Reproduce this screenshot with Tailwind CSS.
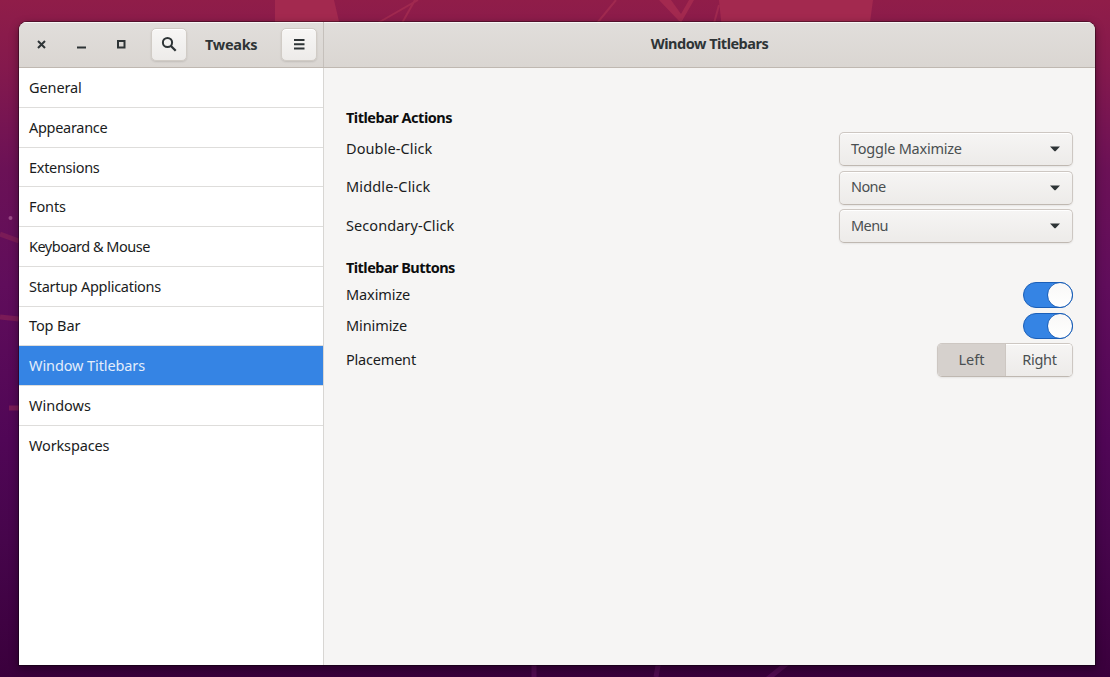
<!DOCTYPE html>
<html lang="en">
<head>
<meta charset="utf-8">
<title>Tweaks</title>
<script src="https://cdn.jsdelivr.net/npm/@tailwindcss/browser@4"></script>
</head>
<body class="relative h-[677px] w-[1110px] overflow-hidden bg-[#4d0752] font-['Noto_Sans','Open_Sans',sans-serif] text-[14.5px] leading-5 text-[#1a1c1d]">
<!-- Wallpaper -->
<svg class="absolute inset-0" width="1110" height="677" viewBox="0 0 1110 677">
  <defs>
    <linearGradient id="sky" x1="0" y1="0" x2="0" y2="1">
      <stop offset="0" stop-color="#901d49"/><stop offset=".1" stop-color="#84194d"/><stop offset=".25" stop-color="#6b1156"/><stop offset=".42" stop-color="#600d5b"/><stop offset=".65" stop-color="#500656"/><stop offset=".8" stop-color="#46054b"/><stop offset="1" stop-color="#3a003c"/>
    </linearGradient>
  </defs>
  <rect width="1110" height="677" fill="url(#sky)"/>
  <path d="M275 0h59l14 60h-73zM719 0h154l-8 60H725z" fill="#a3294f"/>
  <path d="M659 0h12l10 14 8-14h5l-12 21h-3z" fill="#a3294f"/>
  <g fill="none" stroke="#a0294f" stroke-width="2">
    <path d="M343 43L418 0M415 0L384 55M616 0L575 50M681 18v30M719 5L708 45"/>
  </g>
  <g fill="none" stroke="#7a1b57" stroke-width="5">
    <path d="M0 234L19 241M0 317L19 319M9 408h10"/>
  </g>
  <circle cx="10.500" cy="218" r="2" fill="#9a4a86"/>
  <path d="M534 660v17M659 660l-3 17M795 657l-30 24" stroke="#500b50" stroke-width="5" fill="none"/>
</svg>

<!-- Window -->
<main class="absolute top-[22px] left-[19px] flex h-[643px] w-[1076px] flex-col overflow-hidden rounded-t-[8px] bg-[#f6f5f4] shadow-[0_0_0_1px_rgba(0,0,0,0.35),0_3px_9px_1px_rgba(0,0,0,0.35)]">
  <header class="flex h-[46px] shrink-0 border-b border-[#bfb8b1] bg-linear-to-b from-[#e1dedb] to-[#dad6d2] font-bold text-[#2e3436] shadow-[inset_0_1px_#f7f6f5]">
    <div class="flex w-[305px] shrink-0 items-center border-r border-[#c5c0bb] pb-px">
      <svg class="ml-[14px] shrink-0" width="98" height="18" viewBox="0 0 98 18" fill="none" stroke="#2e3436" stroke-width="2">
        <path d="M5 6L12 13M12 6L5 13"/>
        <path d="M44 12.500h9"/>
        <rect x="85" y="6" width="6.500" height="6.500"/>
      </svg>
      <div class="ml-[20px] flex h-[33px] w-[36px] shrink-0 items-center justify-center rounded-[5px] border border-[#d1ccc6] bg-linear-to-b from-[#f7f6f5] to-[#edebe9] shadow-[inset_0_1px_#fff,0_1px_2px_rgba(0,0,0,0.12)]">
        <svg width="16" height="16" viewBox="0 0 16 16" fill="none" stroke="#2e3436" stroke-width="2"><circle cx="6.500" cy="6.500" r="4.600"/><path d="M9.700 9.800L14.700 14.700" stroke-width="2.300"/></svg>
      </div>
      <h1 class="w-[94px] pb-px pl-[18px] tracking-[-0.3px] whitespace-nowrap">Tweaks</h1>
      <div class="flex h-[33px] w-[36px] shrink-0 items-center justify-center rounded-[5px] border border-[#d1ccc6] bg-linear-to-b from-[#f7f6f5] to-[#edebe9] shadow-[inset_0_1px_#fff,0_1px_2px_rgba(0,0,0,0.12)]">
        <svg width="16" height="16" viewBox="0 0 16 16" fill="none" stroke="#2e3436" stroke-width="2"><path d="M3 4h10.500M3 8.300h10.500M3 12.600h10.500"/></svg>
      </div>
    </div>
    <h2 class="flex flex-1 items-center justify-center pb-[3px] tracking-[-0.5px]"><span>Window Titlebars</span></h2>
  </header>
  <div class="flex min-h-0 flex-1">
    <nav class="w-[305px] shrink-0 border-r border-[#d8d6d3] bg-white">
      <ul>
        <li class="flex h-[39.75px] items-center border-b border-[#dedddb] pl-[10px] tracking-[-0.1px]">General</li>
        <li class="flex h-[39.75px] items-center border-b border-[#dedddb] pl-[10px] tracking-[-0.3px]">Appearance</li>
        <li class="flex h-[39.75px] items-center border-b border-[#dedddb] pl-[10px] tracking-[-0.3px]">Extensions</li>
        <li class="flex h-[39.75px] items-center border-b border-[#dedddb] pb-px pl-[10px] tracking-[-0.1px]">Fonts</li>
        <li class="flex h-[39.75px] items-center border-b border-[#dedddb] pl-[10px] tracking-[-0.5px]">Keyboard &amp; Mouse</li>
        <li class="flex h-[39.75px] items-center border-b border-[#dedddb] pl-[10px] tracking-[-0.28px]">Startup Applications</li>
        <li class="flex h-[39.75px] items-center border-b border-[#dedddb] pb-px pl-[10px] tracking-[-0.1px]">Top Bar</li>
        <li class="flex h-[39.75px] items-center border-b border-[#dedddb] bg-[#3584e4] bg-clip-padding pb-px pl-[10px] tracking-[-0.1px] text-[#e3edfb]">Window Titlebars</li>
        <li class="flex h-[39.75px] items-center border-b border-[#dedddb] pl-[10px]">Windows</li>
        <li class="flex h-[39.75px] items-center pb-[2px] pl-[10px] tracking-[-0.15px]">Workspaces</li>
      </ul>
    </nav>
    <section class="flex flex-1 flex-col pt-[39px] pr-[22px] pl-[22px]">
      <h3 class="font-bold tracking-[-0.5px] text-[#0c0d0e]">Titlebar Actions</h3>
      <div class="mt-[5px] flex flex-col gap-[4.6px]">
        <div class="flex h-[34px] items-center justify-between"><span class="pb-[2px] tracking-[0.1px]">Double-Click</span>
          <div class="flex h-[34px] w-[234px] items-center justify-between rounded-[5px] border border-[#cdc7c2] border-b-[#bfb8b1] bg-linear-to-b from-[#f6f5f4] to-[#edebe9] pr-[12px] pl-[11px] text-[#4a4f51] shadow-[inset_0_1px_#fff,0_1px_2px_rgba(0,0,0,0.07)]"><span class="pb-[2px] tracking-[-0.24px]">Toggle Maximize</span><svg width="10" height="6" viewBox="0 0 10 6"><path d="M0 .5h10L5.500 5.300h-1z" fill="#2e3436"/></svg></div></div>
        <div class="flex h-[34px] items-center justify-between"><span class="pb-[3px] tracking-[0.15px]">Middle-Click</span>
          <div class="flex h-[34px] w-[234px] items-center justify-between rounded-[5px] border border-[#cdc7c2] border-b-[#bfb8b1] bg-linear-to-b from-[#f6f5f4] to-[#edebe9] pr-[12px] pl-[11px] text-[#4a4f51] shadow-[inset_0_1px_#fff,0_1px_2px_rgba(0,0,0,0.07)]"><span class="pb-[3px] tracking-[-0.6px]">None</span><svg width="10" height="6" viewBox="0 0 10 6"><path d="M0 .5h10L5.500 5.300h-1z" fill="#2e3436"/></svg></div></div>
        <div class="flex h-[34px] items-center justify-between"><span class="pb-[2px] tracking-[0.07px]">Secondary-Click</span>
          <div class="flex h-[34px] w-[234px] items-center justify-between rounded-[5px] border border-[#cdc7c2] border-b-[#bfb8b1] bg-linear-to-b from-[#f6f5f4] to-[#edebe9] pr-[12px] pl-[11px] text-[#4a4f51] shadow-[inset_0_1px_#fff,0_1px_2px_rgba(0,0,0,0.07)]"><span class="pb-[2px] tracking-[-0.6px]">Menu</span><svg width="10" height="6" viewBox="0 0 10 6"><path d="M0 .5h10L5.500 5.300h-1z" fill="#2e3436"/></svg></div></div>
      </div>
      <h3 class="mt-[13.8px] font-bold tracking-[-0.54px] text-[#0c0d0e]">Titlebar Buttons</h3>
      <div class="mt-[5px] flex h-[26px] items-center justify-between"><span class="pb-px tracking-[-0.1px]">Maximize</span>
        <div class="flex h-[26px] w-[50px] justify-end rounded-full border border-[#1b5fb8] bg-[#3584e4]"><div class="-mt-px -mr-px size-[26px] rounded-full border border-[#1b5fb8] bg-linear-to-b from-[#f9f8f7] to-white"></div></div></div>
      <div class="mt-[5px] flex h-[26px] items-center justify-between"><span class="pb-[2px] tracking-[-0.1px]">Minimize</span>
        <div class="flex h-[26px] w-[50px] justify-end rounded-full border border-[#1b5fb8] bg-[#3584e4]"><div class="-mt-px -mr-px size-[26px] rounded-full border border-[#1b5fb8] bg-linear-to-b from-[#f9f8f7] to-white"></div></div></div>
      <div class="mt-[4.500px] flex h-[34px] items-center justify-between"><span class="pb-[2px] tracking-[-0.2px]">Placement</span>
        <div class="flex h-[34px] w-[136px] overflow-hidden rounded-[5px] border border-[#cdc7c2] border-b-[#bfb8b1] text-center text-[#4a4f51] shadow-[0_1px_2px_rgba(0,0,0,0.07)]">
          <div class="flex w-[68px] items-center justify-center border-r border-[#cdc7c2] bg-[#d6d1cd] pb-[2px]">Left</div>
          <div class="flex flex-1 items-center justify-center bg-linear-to-b from-[#f6f5f4] to-[#edebe9] pb-[2px] pl-px tracking-[-0.3px] shadow-[inset_0_1px_#fff]">Right</div>
        </div></div>
    </section>
  </div>
</main>
</body>
</html>
